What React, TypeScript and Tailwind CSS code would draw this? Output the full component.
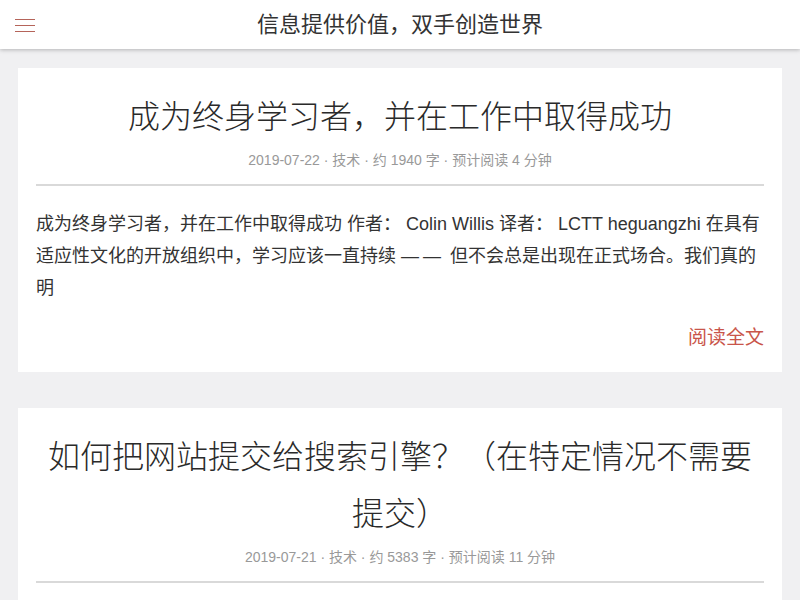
export default function App() {
  const font = { fontFamily: '"Liberation Sans", "Noto Sans CJK SC", sans-serif' };
  return (
    <div className="min-h-screen bg-[#f0f0f2] text-[#333]" style={font}>
      <header className="h-[49px] bg-white shadow-[0_1px_4px_rgba(0,0,0,0.25)] relative flex items-center justify-center">
        <button className="absolute left-[15px] top-[19px] flex flex-col gap-[5px]">
          <span className="block w-[20px] h-[1px] bg-[#b5645a]" />
          <span className="block w-[20px] h-[1px] bg-[#b5645a]" />
          <span className="block w-[20px] h-[1px] bg-[#b5645a]" />
        </button>
        <h1 className="text-[22px] leading-none text-[#333]">信息提供价值，双手创造世界</h1>
      </header>
      <main className="px-[18px] pt-[19px] flex flex-col gap-[36px]">
        <article className="bg-white px-[18px] pt-[21px] pb-[18px]">
          <h2 className="text-[32px] leading-[57px] text-center font-light text-[#2a2a2a]">成为终身学习者，并在工作中取得成功</h2>
          <div className="text-[14px] leading-[28px] text-[#999] text-center">2019-07-22 · 技术 · 约 1940 字 · 预计阅读 4 分钟</div>
          <div className="h-[2px] bg-[#d9d9d9] mt-[10px]" />
          <p className="text-[18px] leading-[32px] mt-[22px]">
            成为终身学习者，并在工作中取得成功 作者： Colin Willis 译者： LCTT heguangzhi 在具有适应性文化的开放组织中，学习应该一直持续 <span className="tracking-[4px]">——</span> 但不会总是出现在正式场合。我们真的明
          </p>
          <div className="text-right mt-[18px]">
            <a className="text-[19px] leading-[32px] text-[#c9554a]">阅读全文</a>
          </div>
        </article>
        <article className="bg-white px-[18px] pt-[21px] pb-[18px]">
          <h2 className="text-[32px] leading-[57px] text-center font-light text-[#2a2a2a]">如何把网站提交给搜索引擎？（在特定情况不需要提交）</h2>
          <div className="text-[14px] leading-[28px] text-[#999] text-center">2019-07-21 · 技术 · 约 5383 字 · 预计阅读 11 分钟</div>
          <div className="h-[2px] bg-[#d9d9d9] mt-[10px]" />
          <p className="text-[18px] leading-[32px] mt-[22px]">
            如何把网站提交给搜索引擎？
          </p>
        </article>
      </main>
    </div>
  );
}
